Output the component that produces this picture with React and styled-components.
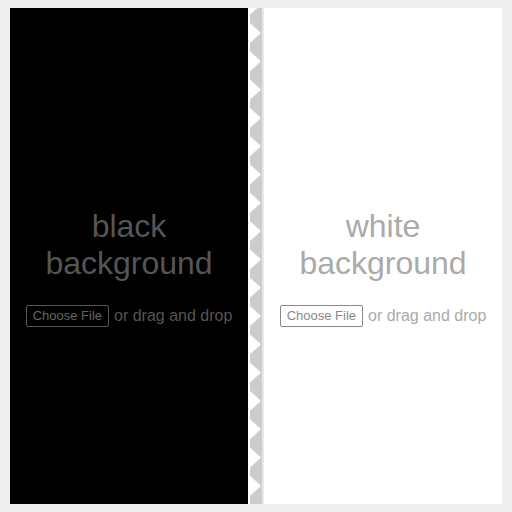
import React from "react";
import styled, { createGlobalStyle, css } from "styled-components";

const GlobalStyle = createGlobalStyle`
  html, body {
    margin: 0;
    padding: 0;
    background: #efefef;
    font-family: "Liberation Sans", Arial, sans-serif;
  }
`;

const Stage = styled.div`
  display: flex;
  height: 496px;
  margin: 8px 10px;
`;

const Panel = styled.div`
  flex: 1;
  display: flex;
  flex-direction: column;
  align-items: center;
  justify-content: center;
  padding-top: 22px;
  box-sizing: border-box;
  background: ${(p) => (p.dark ? "#000" : "#fff")};
  color: ${(p) => (p.dark ? "#555" : "#aaa")};
`;

const Title = styled.div`
  font-size: 32px;
  line-height: 37px;
  text-align: center;
  margin-bottom: 23px;
`;

const DropRow = styled.div`
  display: flex;
  align-items: center;
  gap: 5px;
  font-size: 16px;
`;

const ChooseButton = styled.label`
  display: inline-flex;
  align-items: center;
  height: 22px;
  box-sizing: border-box;
  padding: 0 6px;
  font-size: 13px;
  border-radius: 2px;
  cursor: pointer;
  ${(p) =>
    p.dark
      ? css`
          border: 1px solid #555;
          color: #666;
        `
      : css`
          border: 1px solid #8a8a8a;
          color: #888;
        `}

  input {
    display: none;
  }
`;

const Divider = styled.div`
  width: 12px;
  border-left: 2px solid #fff;
  border-right: 2px solid #e8e8e8;
  background: #fff;

  svg {
    display: block;
    width: 12px;
    height: 100%;
  }
`;

function ZigZag() {
  return (
    <svg viewBox="0 0 12 496" preserveAspectRatio="none">
      <defs>
        <pattern id="zig" width="12" height="28.3" y="10.85" patternUnits="userSpaceOnUse">
          <rect width="12" height="28.3" fill="#cccccc" />
          <polygon points="0,4.15 11,14.15 0,24.15" fill="#ffffff" />
        </pattern>
      </defs>
      <rect width="12" height="496" fill="url(#zig)" />
    </svg>
  );
}

function DropZone({ dark, label }) {
  return (
    <Panel dark={dark}>
      <Title>
        {label}
        <br />
        background
      </Title>
      <DropRow>
        <ChooseButton dark={dark}>
          Choose File
          <input type="file" />
        </ChooseButton>
        <span>or drag and drop</span>
      </DropRow>
    </Panel>
  );
}

export default function App() {
  return (
    <>
      <GlobalStyle />
      <Stage>
        <DropZone dark label="black" />
        <Divider>
          <ZigZag />
        </Divider>
        <DropZone label="white" />
      </Stage>
    </>
  );
}
